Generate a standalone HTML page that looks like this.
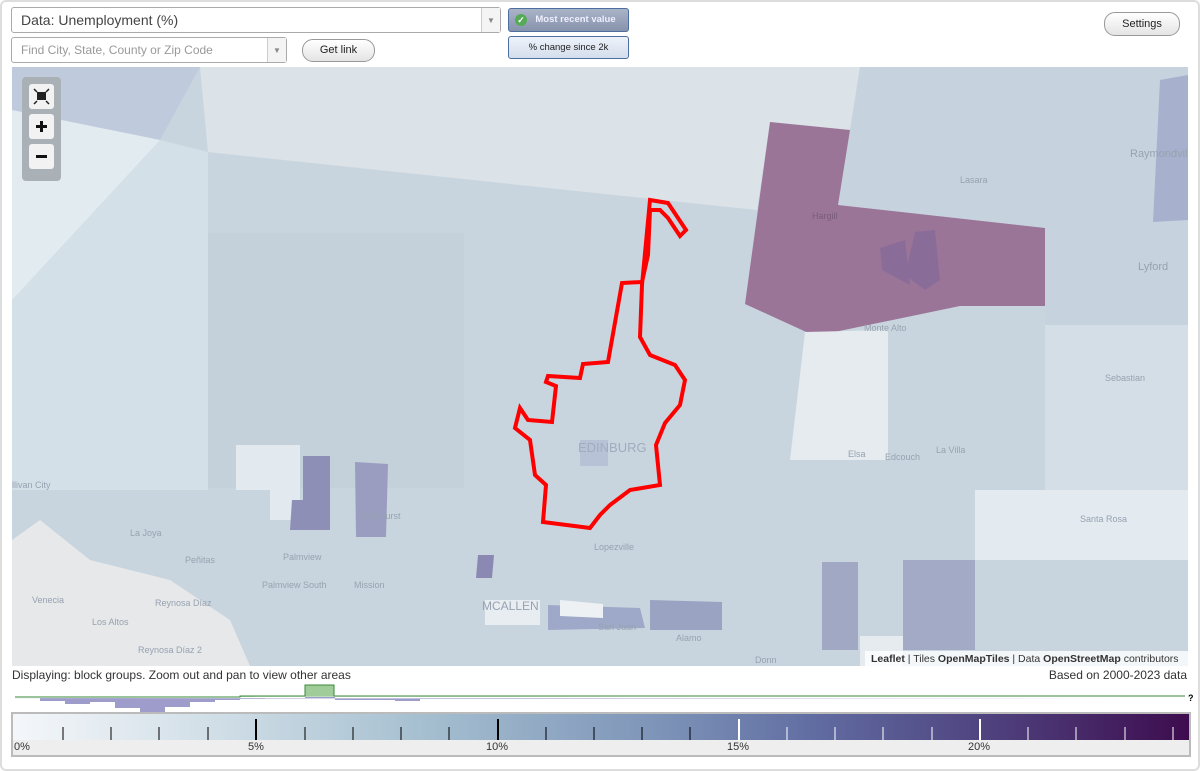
<!DOCTYPE html>
<html><head><meta charset="utf-8"><style>
*{box-sizing:border-box}
body{margin:0;width:1200px;height:771px;background:#fff;font-family:"Liberation Sans",sans-serif;position:relative;overflow:hidden}
.frame{position:absolute;left:0;top:0;width:1200px;height:771px;border:2px solid #ddd;border-radius:6px}
.sel{position:absolute;background:#fff;border:1px solid #aaa;border-radius:3px;color:#444}
.sel .arr{position:absolute;right:0;top:0;bottom:0;width:19px;border-left:1px solid #ccc;background:#f4f4f4;font-size:8px;color:#888;text-align:center}
.btn{position:absolute;border:1px solid #999;border-radius:11px;background:linear-gradient(#fff,#e4e4e4);font-size:11px;text-align:center;color:#222}
.tg{position:absolute;border:1px solid #4d6ea0;border-radius:3px;font-size:9.5px;text-align:center}
</style></head><body>
<div class="frame"></div>
<div class="sel" style="left:11px;top:7px;width:490px;height:26px;font-size:14px;line-height:25px;padding-left:9px">Data: Unemployment (%)<div class="arr" style="line-height:25px">▼</div></div>
<div class="sel" style="left:11px;top:37px;width:276px;height:26px;font-size:12px;line-height:25px;padding-left:9px;color:#999">Find City, State, County or Zip Code<div class="arr" style="line-height:25px">▼</div></div>
<div class="btn" style="left:302px;top:39px;width:73px;height:23px;line-height:21px">Get link</div>
<div class="tg" style="left:508px;top:8px;width:121px;height:24px;line-height:22px;background:linear-gradient(#aab4c8,#8793ac);color:#eef;font-weight:bold;padding-left:14px"><span style="position:absolute;left:6px;top:5px;width:12px;height:12px;border-radius:6px;background:#5a5;color:#fff;font-size:9px;line-height:12px">✓</span>Most recent value</div>
<div class="tg" style="left:508px;top:36px;width:121px;height:23px;line-height:21px;background:linear-gradient(#eef3fa,#d4deec);color:#222">% change since 2k</div>
<div class="btn" style="left:1104px;top:12px;width:76px;height:24px;line-height:22px">Settings</div>

<svg style="position:absolute;left:12px;top:67px" width="1176" height="599" viewBox="12 67 1176 599">
<rect x="12" y="67" width="1176" height="599" fill="#c9d5de"/>
<polygon points="12,67 200,67 160,140 12,110" fill="#bfcadd"/>
<polygon points="12,110 160,140 12,490" fill="#e1ebf0"/>
<polygon points="200,67 860,67 850,130 770,122 757,210 208,152" fill="#dbe3e8"/>
<polygon points="160,140 208,152 208,490 12,490 12,300" fill="#d4e0e8"/>
<rect x="208" y="233" width="256" height="255" fill="#c4d0da"/>
<polygon points="860,67 1188,67 1188,360 1045,360 1045,228 838,205 850,130" fill="#c6d3de"/>
<polygon points="1160,80 1188,75 1188,220 1153,222" fill="#a7b0cc"/>
<polygon points="1045,325 1188,325 1188,490 1045,490" fill="#d3dee6"/>
<polygon points="975,490 1188,490 1188,560 975,560" fill="#e3eaf0"/>
<polygon points="770,122 850,130 838,205 1045,228 1045,306 960,306 815,336 745,304" fill="#9b7598"/>
<polygon points="880,248 905,240 910,285 882,270" fill="#8a6c98"/>
<polygon points="915,232 935,230 940,280 925,290 905,275" fill="#8a6c98"/>
<polygon points="805,332 888,330 888,460 790,460" fill="#e5ebee"/>
<polygon points="12,540 40,520 90,560 170,580 230,620 250,666 12,666" fill="#e6e8ea"/>
<polygon points="236,445 300,445 300,520 270,520 270,490 236,490" fill="#e2e9ef"/>
<polygon points="303,456 330,456 330,530 290,530 292,500 303,500" fill="#8d8fb6"/>
<polygon points="355,462 388,464 386,537 356,537" fill="#9a9dc0"/>
<polygon points="478,555 494,555 492,578 476,578" fill="#8b89b3"/>
<polygon points="548,605 640,608 645,628 548,630" fill="#9ea8c8"/>
<polygon points="650,600 722,602 722,630 650,630" fill="#9aa3c2"/>
<polygon points="560,600 603,604 603,618 560,616" fill="#eef1f4"/>
<polygon points="485,600 540,600 540,625 485,625" fill="#e8edf2"/>
<polygon points="822,562 858,562 858,650 822,650" fill="#a1a8c4"/>
<polygon points="903,560 975,560 975,650 903,650" fill="#a3aac6"/>
<polygon points="860,636 903,636 903,666 860,666" fill="#e6ebef"/>
<polygon points="580,440 608,440 608,466 580,466" fill="#b8c2d6"/>
<polygon points="650,200 668,203 686,230 680,236 668,218 660,210 650,210 648,255 642,282 622,283 608,362 583,364 580,378 548,376 546,382 556,386 552,422 528,420 520,408 515,428 530,440 535,475 546,485 543,522 590,528 600,515 610,505 630,490 660,485 656,445 665,423 680,405 685,380 675,365 650,355 640,337 642,285" fill="none" stroke="#f00" stroke-width="4"/>
<g font-size="9" fill="#97a2b0" font-family="Liberation Sans,sans-serif">
<text x="578" y="452" font-size="13" fill="#a0acbf">EDINBURG</text>
<text x="812" y="219" fill="#7a5a7e">Hargill</text>
<text x="960" y="183">Lasara</text>
<text x="1130" y="157" font-size="11">Raymondville</text>
<text x="1138" y="270" font-size="11">Lyford</text>
<text x="864" y="331">Monte Alto</text>
<text x="1105" y="381">Sebastian</text>
<text x="848" y="457">Elsa</text>
<text x="885" y="460">Edcouch</text>
<text x="936" y="453">La Villa</text>
<text x="1080" y="522">Santa Rosa</text>
<text x="360" y="519">Palmhurst</text>
<text x="283" y="560">Palmview</text>
<text x="262" y="588">Palmview South</text>
<text x="354" y="588">Mission</text>
<text x="482" y="610" font-size="12">MCALLEN</text>
<text x="594" y="550">Lopezville</text>
<text x="598" y="630">San Juan</text>
<text x="676" y="641">Alamo</text>
<text x="32" y="603">Venecia</text>
<text x="92" y="625">Los Altos</text>
<text x="155" y="606">Reynosa Díaz</text>
<text x="138" y="653">Reynosa Díaz 2</text>
<text x="12" y="488">llivan City</text>
<text x="130" y="536">La Joya</text>
<text x="185" y="563">Peñitas</text>
<text x="755" y="663">Donn</text>
</g>
<rect x="865" y="651" width="323" height="15" fill="rgba(255,255,255,0.8)"/>
<text x="871" y="662" font-size="10.5" fill="#333" font-family="Liberation Sans,sans-serif"><tspan font-weight="bold">Leaflet</tspan> | Tiles <tspan font-weight="bold">OpenMapTiles</tspan> | Data <tspan font-weight="bold">OpenStreetMap</tspan> contributors</text>
<rect x="22" y="77" width="39" height="104" rx="4" fill="#a9b0b6"/>
<rect x="29" y="84" width="25" height="25" rx="3" fill="#f2f2f2"/>
<rect x="37" y="92" width="9" height="8" fill="#222"/>
<path d="M34 89l3 3M49 89l-3 3M34 104l3-3M49 104l-3-3" stroke="#222" stroke-width="1.5"/>
<rect x="29" y="114" width="25" height="25" rx="3" fill="#f2f2f2"/>
<rect x="29" y="144" width="25" height="25" rx="3" fill="#f2f2f2"/>
<path d="M36 126.5h11M41.5 121v11" stroke="#111" stroke-width="3"/>
<path d="M36 156.5h11" stroke="#111" stroke-width="3"/>
</svg>

<div style="position:absolute;left:12px;top:668px;font-size:12px;color:#333">Displaying: block groups. Zoom out and pan to view other areas</div>
<div style="position:absolute;right:13px;top:668px;font-size:12px;color:#333">Based on 2000-2023 data</div>
<svg style="position:absolute;left:0;top:683px" width="1200" height="30">
<path d="M15 15H40V18H65V21H90V19H115V25H140V29H165V24H190V19H215V17H240V16H265V15H305V14H335V17H395V18H420V16H1185" fill="#9d9ccb" stroke="none"/>
<path d="M15 14H240V13H305V2H334V13H1185" fill="#9fcc99" stroke="#3a8a3a" stroke-width="1"/>
<text x="1188" y="18" font-size="9" font-weight="bold" font-family="Liberation Sans">?</text>
</svg>
<div style="position:absolute;left:11px;top:712px;width:1180px;height:45px;border:2px solid #bbb;background:#eee">
<div style="position:absolute;left:0;top:0;right:0;height:26px;background:linear-gradient(90deg,#f4f7fa 0%,#cfdde6 18%,#a5bfd0 35%,#7d94b8 55%,#616da2 68%,#504581 82%,#3d0c4e 100%)"></div>
<svg style="position:absolute;left:0;top:0" width="1176" height="26">
<g stroke="#000" stroke-width="1">
<path d="M50 13V26M98 13V26M146 13V26M195 13V26M292 13V26M340 13V26M388 13V26M436 13V26M533 13V26M581 13V26M629 13V26M677 13V26"/>
<path d="M243 5V26M485 5V26" stroke-width="2"/>
</g>
<g stroke="#fff" stroke-width="1">
<path d="M774 13V26M822 13V26M870 13V26M919 13V26M1015 13V26M1063 13V26M1112 13V26M1160 13V26"/>
<path d="M726 5V26M967 5V26" stroke-width="2"/>
</g>
</svg>
<div style="position:absolute;top:27px;left:1px;font-size:11px;color:#333">0%</div>
<div style="position:absolute;top:27px;left:235px;font-size:11px;color:#333">5%</div>
<div style="position:absolute;top:27px;left:473px;font-size:11px;color:#333">10%</div>
<div style="position:absolute;top:27px;left:714px;font-size:11px;color:#333">15%</div>
<div style="position:absolute;top:27px;left:955px;font-size:11px;color:#333">20%</div>
</div>
</body></html>
